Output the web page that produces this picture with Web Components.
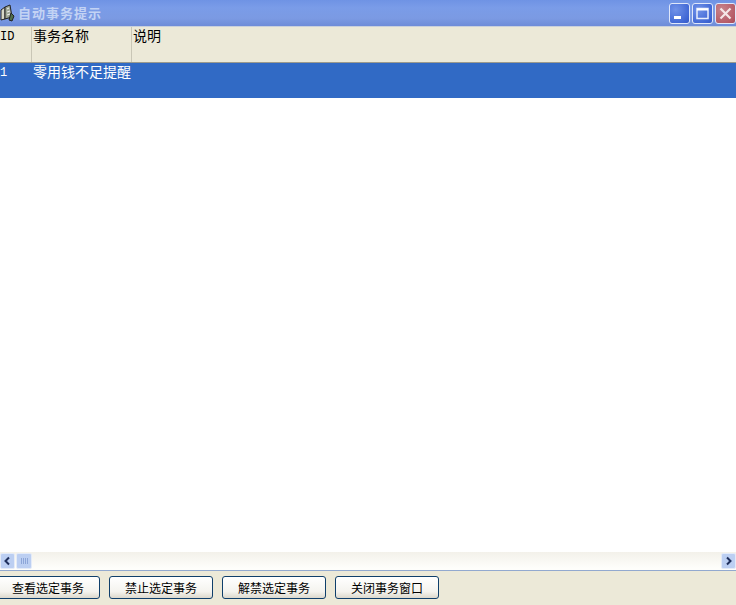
<!DOCTYPE html>
<html>
<head>
<meta charset="utf-8">
<title>自动事务提示</title>
<style>
    html, body { margin: 0; padding: 0; height: 100%; overflow: hidden; }
    body { font-family: "Noto Sans CJK SC", "Liberation Sans", sans-serif; }
</style>
</head>
<body>
<task-window>
    <title-bar slot="title">自动事务提示</title-bar>
    <task-grid slot="grid"></task-grid>
    <h-scroll slot="scroll"></h-scroll>
    <action-bar slot="actions">
        <xp-button>查看选定事务</xp-button>
        <xp-button>禁止选定事务</xp-button>
        <xp-button>解禁选定事务</xp-button>
        <xp-button>关闭事务窗口</xp-button>
    </action-bar>
</task-window>

<script>
class TaskWindow extends HTMLElement {
    constructor() {
        super();
        this.attachShadow({ mode: 'open' });
        this.shadowRoot.innerHTML = `
            <style>
                :host { display: flex; flex-direction: column; width: 736px; height: 605px; background: #fff; }
                .grid { display: flex; flex: 1; min-height: 0; }
            </style>
            <slot name="title"></slot>
            <div class="grid"><slot name="grid"></slot></div>
            <slot name="scroll"></slot>
            <slot name="actions"></slot>
        `;
    }
}

class TitleBar extends HTMLElement {
    constructor() {
        super();
        this.attachShadow({ mode: 'open' });
        this.shadowRoot.innerHTML = `
            <style>
                :host {
                    display: flex; align-items: center; height: 27px; box-sizing: border-box;
                    background: linear-gradient(#6f93e4 0, #7a9ce8 30%, #7b9ae3 70%, #6e8cd8 100%);
                    border-bottom: 1px solid #c9d0dc;
                    flex: none;
                }
                .icon { width: 15px; height: 18px; margin-right: 3px; flex: none; }
                .text { flex: 1; font: bold 13px/14px "Noto Sans CJK SC", sans-serif; color: #c3d3f4; letter-spacing: 1px; }
                .btns { display: flex; gap: 2px; margin-right: 0; padding-top: 1px; }
                .btn { width: 21px; height: 21px; box-sizing: border-box; border: 1px solid #dfe7fa; border-radius: 3px; display: block; }
                .blue { background: radial-gradient(circle at 30% 30%, #7092e8, #3f66d4 75%, #3558c4); }
                .red { background: radial-gradient(circle at 30% 30%, #c8848c, #b55a66 75%, #a34a58); }
            </style>
            <svg class="icon" viewBox="0 0 15 18">
                <path d="M1 6 L5 3 L5 15 L1 16 Z" fill="#d8d8c8" stroke="#222" stroke-width="1"/>
                <path d="M5 3 L10 1 L12 13 L5 15 Z" fill="#a0a896" stroke="#222" stroke-width="1"/>
                <path d="M7 5 L9 4 M7 8 L10 7 M7 11 L10 10" stroke="#eee" stroke-width="1"/>
                <path d="M11 9 L14 12 L12 17 L9 16 Z" fill="#4f6f4a" stroke="#222" stroke-width="1"/>
            </svg>
            <span class="text"><slot></slot></span>
            <div class="btns">
                <svg class="btn blue" viewBox="0 0 19 19"><rect x="4" y="12" width="7" height="3" fill="#fff"/></svg>
                <svg class="btn blue" viewBox="0 0 19 19"><rect x="4" y="4.5" width="11" height="10" fill="none" stroke="#e8eefc" stroke-width="1.5"/><path d="M4 5.5H15" stroke="#fff" stroke-width="2"/></svg>
                <svg class="btn red" viewBox="0 0 19 19"><path d="M4.5 4.5 L14.5 14.5 M14.5 4.5 L4.5 14.5" stroke="#f4e6e6" stroke-width="2.2"/></svg>
            </div>
        `;
    }
}

class TaskGrid extends HTMLElement {
    constructor() {
        super();
        this.attachShadow({ mode: 'open' });
        this.shadowRoot.innerHTML = `
            <style>
                :host { display: block; flex: 1; background: #fff; font: 14px/16px "Noto Sans CJK SC", sans-serif; }
                .head, .row { display: grid; grid-template-columns: 32px 100px 1fr; }
                .head { height: 36px; box-sizing: border-box; background: #ece9d8; border-bottom: 1px solid #9a9a8e; color: #000; }
                .head div { padding: 0 0 0 1px; box-sizing: border-box; border-right: 1px solid #c9c6b6; }
                .head div:last-child { padding-left: 1px; border-right: 0; }
                .row { height: 35px; background: #316ac5; color: #fff; }
                .row div { padding: 0 0 0 1px; }
                .head div.mono { padding: 2px 0 0 0; }
                .row div.mono { padding: 2px 0 0 0; }
                .mono { font: 12px/16px "Liberation Mono", monospace; }
            </style>
            <div class="head">
                <div class="mono">ID</div>
                <div>事务名称</div>
                <div>说明</div>
            </div>
            <div class="row">
                <div class="mono">1</div>
                <div style="white-space: nowrap">零用钱不足提醒</div>
                <div></div>
            </div>
        `;
    }
}

class HScroll extends HTMLElement {
    constructor() {
        super();
        this.attachShadow({ mode: 'open' });
        this.shadowRoot.innerHTML = `
            <style>
                :host {
                    display: flex; align-items: center; justify-content: space-between; flex: none;
                    height: 19px; box-sizing: border-box; padding: 1px 0;
                    background: linear-gradient(#f3f1ea, #fefefb 90%);
                    border-bottom: 1px solid #92a9cf;
                }
                .left { display: flex; gap: 1px; }
                .b { width: 15px; height: 16px; box-sizing: border-box; border: 1px solid #e4ebf8; border-radius: 2px; background: #bccff2; display: block; }
                .thumb { width: 16px; }
            </style>
            <div class="left">
                <svg class="b" viewBox="0 0 13 14"><path d="M8 3.5 L4.5 7 L8 10.5" fill="none" stroke="#1f2f5c" stroke-width="2"/></svg>
                <svg class="b thumb" viewBox="0 0 14 14"><path d="M4.5 4V10M6.5 4V10M8.5 4V10M10.5 4V10" stroke="#8da6d8" stroke-width="1"/></svg>
            </div>
            <svg class="b" viewBox="0 0 13 14"><path d="M5 3.5 L8.5 7 L5 10.5" fill="none" stroke="#1f2f5c" stroke-width="2"/></svg>
        `;
    }
}

class ActionBar extends HTMLElement {
    constructor() {
        super();
        this.attachShadow({ mode: 'open' });
        this.shadowRoot.innerHTML = `
            <style>
                :host {
                    display: block; flex: none; height: 34px; box-sizing: border-box;
                    padding-top: 5px; background: #ece9d8;
                }
                .wrap { display: flex; gap: 9px; margin-left: -4px; }
            </style>
            <div class="wrap"><slot></slot></div>
        `;
    }
}

class XpButton extends HTMLElement {
    constructor() {
        super();
        this.attachShadow({ mode: 'open' });
        this.shadowRoot.innerHTML = `
            <style>
                :host {
                    display: flex; align-items: center; justify-content: center;
                    width: 104px; height: 23px; box-sizing: border-box;
                    border: 1px solid #0f3f6b; border-radius: 3px;
                    background: linear-gradient(#ffffff, #f4f3ee 70%, #dcd8cc);
                    font: 12px/14px "Noto Sans CJK SC", sans-serif; color: #000;
                }
            </style>
            <slot></slot>
        `;
    }
}

customElements.define('task-window', TaskWindow);
customElements.define('title-bar', TitleBar);
customElements.define('task-grid', TaskGrid);
customElements.define('h-scroll', HScroll);
customElements.define('action-bar', ActionBar);
customElements.define('xp-button', XpButton);
</script>
</body>
</html>
